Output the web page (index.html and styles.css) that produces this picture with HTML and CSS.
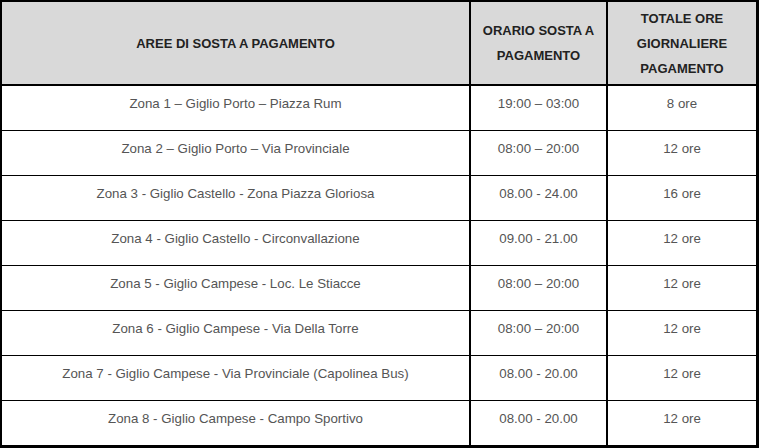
FILE: index.html
```html
<!DOCTYPE html>
<html lang="it">
<head>
<meta charset="utf-8">
<title>Aree di sosta a pagamento</title>
<link rel="stylesheet" href="styles.css">
</head>
<body>
<table class="parking">
  <colgroup>
    <col class="c1">
    <col class="c2">
    <col class="c3">
  </colgroup>
  <thead>
    <tr>
      <th>AREE DI SOSTA A PAGAMENTO</th>
      <th>ORARIO SOSTA A<br>PAGAMENTO</th>
      <th>TOTALE ORE<br>GIORNALIERE<br>PAGAMENTO</th>
    </tr>
  </thead>
  <tbody>
    <tr><td>Zona 1 – Giglio Porto – Piazza Rum</td><td>19:00 – 03:00</td><td>8 ore</td></tr>
    <tr><td>Zona 2 – Giglio Porto – Via Provinciale</td><td>08:00 – 20:00</td><td>12 ore</td></tr>
    <tr><td>Zona 3 - Giglio Castello - Zona Piazza Gloriosa</td><td>08.00 - 24.00</td><td>16 ore</td></tr>
    <tr><td>Zona 4 - Giglio Castello - Circonvallazione</td><td>09.00 - 21.00</td><td>12 ore</td></tr>
    <tr><td>Zona 5 - Giglio Campese - Loc. Le Stiacce</td><td>08:00 – 20:00</td><td>12 ore</td></tr>
    <tr><td>Zona 6 - Giglio Campese - Via Della Torre</td><td>08:00 – 20:00</td><td>12 ore</td></tr>
    <tr><td>Zona 7 - Giglio Campese - Via Provinciale (Capolinea Bus)</td><td>08.00 - 20.00</td><td>12 ore</td></tr>
    <tr><td>Zona 8 - Giglio Campese - Campo Sportivo</td><td>08.00 - 20.00</td><td>12 ore</td></tr>
  </tbody>
</table>
</body>
</html>
```
FILE: styles.css
```css
html, body {
  margin: 0;
  padding: 0;
  background: #fff;
}

.parking {
  border-collapse: separate;
  border-spacing: 0;
  width: 759px;
  table-layout: fixed;
  border-top: 2px solid #000;
  border-left: 2px solid #000;
  border-right: 3px solid #000;
  border-bottom: 3px solid #000;
  font-family: "Liberation Sans", Arial, sans-serif;
}

.c1 { width: 469px; }
.c2 { width: 137px; }
.c3 { width: 148px; }

.parking th,
.parking td {
  padding: 0;
  text-align: center;
  border-right: 2px solid #000;
}

.parking th:last-child,
.parking td:last-child {
  border-right: 0;
}

.parking th {
  height: 82px;
  background: #d9d9d9;
  color: #222;
  font-size: 13px;
  font-weight: bold;
  line-height: 25px;
  vertical-align: middle;
  border-bottom: 2px solid #000;
}

.parking td {
  height: 44px;
  box-sizing: border-box;
  padding: 8px 0 16px;
  color: #555;
  font-size: 13.3px;
  line-height: 20px;
  vertical-align: top;
  border-top: 1px solid #000;
}

.parking tbody tr:first-child td {
  border-top: 0;
}
```
